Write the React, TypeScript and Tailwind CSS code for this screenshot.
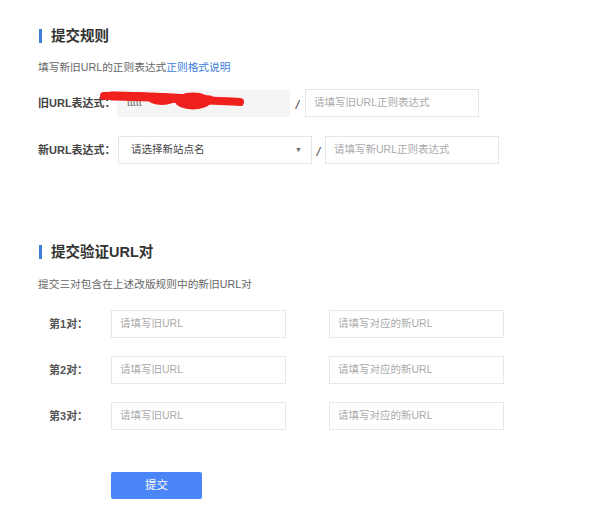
import React from "react";

const font = {
  fontFamily: '"Liberation Sans", "Noto Sans CJK SC", sans-serif',
};

function SectionTitle({ text }: { text: string }) {
  return (
    <div className="flex items-center h-[18px]">
      <div className="w-[3px] h-[14px] bg-[#3d7fd8] ml-[1px]" />
      <div className="ml-[9px] text-[14.5px] leading-[18px] font-bold text-[#333]">{text}</div>
    </div>
  );
}

function Input({ w, placeholder }: { w: string; placeholder: string }) {
  return (
    <div className={`${w} h-[28px] border border-[#e6e6e6] bg-white flex items-center pl-[8px] text-[#aaa] whitespace-nowrap`}>
      {placeholder}
    </div>
  );
}

function Pair({ n }: { n: number }) {
  return (
    <div className="flex items-center h-[28px] pl-[11px]">
      <div className="w-[62px] shrink-0 whitespace-nowrap font-bold text-[#555] text-[11px]">第{n}对：</div>
      <div className="w-[175px] h-[28px] border border-[#e8e8e8] flex items-center pl-[8px] text-[#aaa]">请填写旧URL</div>
      <div className="ml-[43px] w-[175px] h-[28px] border border-[#e8e8e8] flex items-center pl-[8px] text-[#aaa]">请填写对应的新URL</div>
    </div>
  );
}

export default function App() {
  return (
    <div className="relative w-[600px] h-[511px] bg-white overflow-hidden pl-[38px] pt-[27px] text-[10.5px]" style={font}>
      <SectionTitle text="提交规则" />
      <div className="mt-[15px] leading-[14px] text-[#666] text-[10.7px]">
        填写新旧URL的正则表达式<span className="text-[#3b7ddb]">正则格式说明</span>
      </div>

      <div className="mt-[15px] flex items-center h-[28px]">
        <div className="w-[79px] shrink-0 whitespace-nowrap font-bold text-[#444] text-[11px]">旧URL表达式：</div>
        <div className="w-[173px] shrink-0 h-[27px] bg-[#f5f5f5] flex items-center pl-[10px] text-[#666] overflow-hidden">
          ttttt
        </div>
        <div className="w-[15px] self-end pb-[3px] text-center text-[#333] italic text-[12px]">/</div>
        <Input w="w-[174px]" placeholder="请填写旧URL正则表达式" />
      </div>

      <div className="mt-[19px] flex items-center h-[28px]">
        <div className="w-[80px] shrink-0 whitespace-nowrap font-bold text-[#444] text-[11px]">新URL表达式：</div>
        <div className="w-[194px] shrink-0 h-[28px] border border-[#e6e6e6] flex items-center pl-[12px] pr-[9px] text-[#444]">
          <span className="flex-1">请选择新站点名</span>
          <span className="text-[7px] text-[#666]">▼</span>
        </div>
        <div className="w-[13px] self-end pb-[3px] text-center text-[#333] italic text-[12px]">/</div>
        <Input w="w-[174px]" placeholder="请填写新URL正则表达式" />
      </div>

      <div className="mt-[79px]">
        <SectionTitle text="提交验证URL对" />
      </div>
      <div className="mt-[16px] leading-[14px] text-[#666] text-[10.7px]">提交三对包含在上述改版规则中的新旧URL对</div>

      <div className="mt-[19px] flex flex-col gap-[18px]">
        <Pair n={1} />
        <Pair n={2} />
        <Pair n={3} />
      </div>

      <div className="mt-[42px] ml-[73px] w-[91px] h-[27px] rounded-[2px] bg-[#4a86f7] text-white flex items-center justify-center text-[11.5px]">
        提交
      </div>

      <svg className="absolute inset-0 pointer-events-none" width="600" height="511" viewBox="0 0 600 511">
        <path d="M104,96 C130,95 160,98 200,100 C215,101 230,101 240,102" stroke="#f0201c" strokeWidth="8" strokeLinecap="round" fill="none" />
        <path d="M112,96 C140,96 170,98 210,100" stroke="#f0201c" strokeWidth="9" strokeLinecap="round" fill="none" />
        <ellipse cx="193" cy="101" rx="18" ry="8.5" fill="#f0201c" />
        <ellipse cx="162" cy="99" rx="14" ry="6" fill="#f0201c" />
      </svg>
    </div>
  );
}
